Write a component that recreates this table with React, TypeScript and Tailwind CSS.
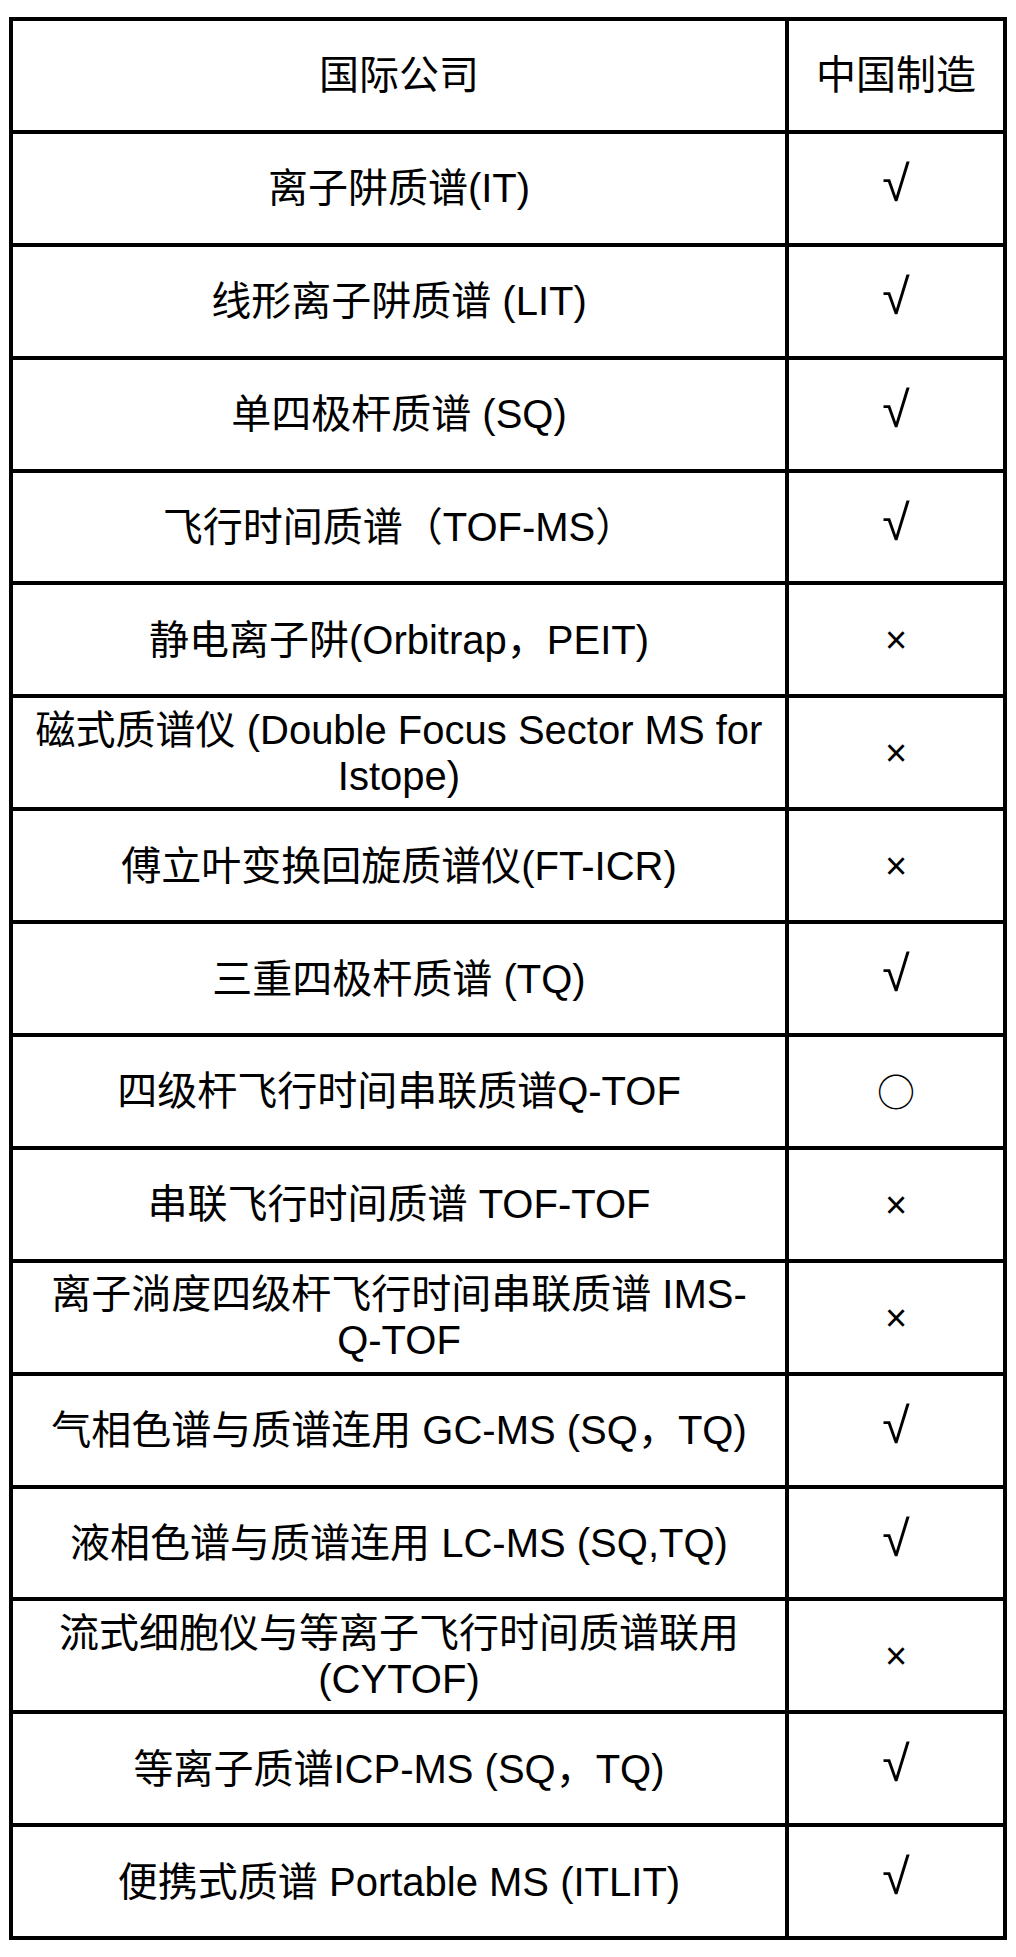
import React from 'react'

// Mass spectrometry types: international vs made in China
const rows: { name: React.ReactNode; china: string }[] = [
  { name: '离子阱质谱(IT)', china: '√' },
  { name: '线形离子阱质谱 (LIT)', china: '√' },
  { name: '单四极杆质谱 (SQ)', china: '√' },
  { name: '飞行时间质谱（TOF-MS）', china: '√' },
  { name: '静电离子阱(Orbitrap，PEIT)', china: '×' },
  {
    name: (
      <>
        磁式质谱仪 (Double Focus Sector MS for
        <br />
        Istope)
      </>
    ),
    china: '×',
  },
  { name: '傅立叶变换回旋质谱仪(FT-ICR)', china: '×' },
  { name: '三重四极杆质谱 (TQ)', china: '√' },
  { name: '四级杆飞行时间串联质谱Q-TOF', china: '○' },
  { name: '串联飞行时间质谱 TOF-TOF', china: '×' },
  {
    name: (
      <>
        离子淌度四级杆飞行时间串联质谱 IMS-
        <br />
        Q-TOF
      </>
    ),
    china: '×',
  },
  { name: '气相色谱与质谱连用 GC-MS (SQ，TQ)', china: '√' },
  { name: '液相色谱与质谱连用 LC-MS (SQ,TQ)', china: '√' },
  {
    name: (
      <>
        流式细胞仪与等离子飞行时间质谱联用
        <br />
        (CYTOF)
      </>
    ),
    china: '×',
  },
  { name: '等离子质谱ICP-MS (SQ，TQ)', china: '√' },
  { name: '便携式质谱 Portable MS (ITLIT)', china: '√' },
]

function Cell({ children }: { children: React.ReactNode }) {
  return (
    <div className="h-[112.9px] border-r-4 border-b-4 border-black flex items-center justify-center text-center whitespace-nowrap text-[40px]">
      <div className="leading-[46px]">{children}</div>
    </div>
  )
}

// ○ comes from the CJK face (full-width circle); √ and × stay in the Latin face
function Mark({ value }: { value: string }) {
  if (value === '×') return <span className="text-[38px]">×</span>
  if (value === '○')
    return (
      <span className="text-[38px]" style={{ fontFamily: '"Noto Sans CJK SC", sans-serif' }}>
        ○
      </span>
    )
  return <span className="text-[50px] relative -top-[3px]">√</span>
}

export default function App() {
  return (
    <div
      className="min-h-[1957px] bg-white pt-[17px] pl-[9px] text-black"
      style={{ fontFamily: '"Liberation Sans", "Noto Sans CJK SC", sans-serif' }}
    >
      <div className="grid grid-cols-[776px_218px] w-[998px] border-l-4 border-t-4 border-black">
        <Cell>国际公司</Cell>
        <Cell>中国制造</Cell>
        {rows.map((row, i) => (
          <React.Fragment key={i}>
            <Cell>{row.name}</Cell>
            <Cell>
              <Mark value={row.china} />
            </Cell>
          </React.Fragment>
        ))}
      </div>
    </div>
  )
}
